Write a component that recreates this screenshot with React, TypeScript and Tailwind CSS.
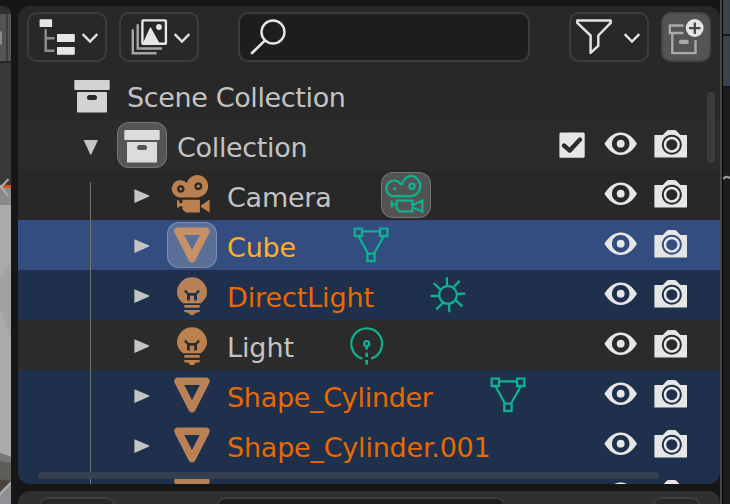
import React from "react";

type IconKind = "collection" | "camera" | "mesh" | "bulb";
type DataKind = "camera" | "mesh" | "sun" | "point";

interface Item {
  name: string;
  icon: IconKind;
  row: string;
  text: string;
  nameWidth?: string;
  data?: DataKind;
  active?: boolean;
  dataActive?: boolean;
}

const items: Item[] = [
  { name: "Camera", icon: "camera", row: "bg-[#282828]", text: "text-[#c3c3c3] tracking-[-0.25px]", nameWidth: "w-[154px]", data: "camera", dataActive: true },
  { name: "Cube", icon: "mesh", row: "bg-[#334d80]", text: "text-[#ffaf29] tracking-[-0.2px]", nameWidth: "w-[119px]", data: "mesh", active: true },
  { name: "DirectLight", icon: "bulb", row: "bg-[#1e304b]", text: "text-[#e96a00] tracking-[-0.12px]", nameWidth: "w-[196px]", data: "sun" },
  { name: "Light", icon: "bulb", row: "bg-[#2b2b2b]", text: "text-[#c3c3c3] tracking-[-0.1px]", nameWidth: "w-[115px]", data: "point" },
  { name: "Shape_Cylinder", icon: "mesh", row: "bg-[#1e304b]", text: "text-[#e96a00] tracking-[-0.3px]", nameWidth: "w-[256px]", data: "mesh" },
  { name: "Shape_Cylinder.001", icon: "mesh", row: "bg-[#1e304b]", text: "text-[#e96a00] tracking-[-0.22px]" },
  { name: "", icon: "mesh", row: "bg-[#1e304b]", text: "text-[#e96a00]" },
];

const cell = { width: 50, height: 50, viewBox: "0 0 50 50", className: "shrink-0" };

function CollectionIcon({ hole = "#282828", fill = "#d3d3d3" }) {
  return (
    <svg {...cell} fill={fill}>
      <rect x="7.3" y="10" width="35.4" height="10" rx="1" />
      <rect x="10" y="22" width="30" height="20.6" rx=".7" />
      <rect x="20" y="25" width="10" height="5" rx="2.5" fill={hole} />
    </svg>
  );
}

function ObjectIcon({ kind }: { kind: IconKind }) {
  if (kind === "mesh")
    return (
      <svg {...cell} fill="none" stroke="currentColor" strokeWidth="7.6" strokeLinejoin="round">
        <path d="M11.1 11.2H38.9L25 38.5Z" />
      </svg>
    );
  if (kind === "bulb")
    return (
      <svg {...cell} fill="currentColor">
        <path
          fillRule="evenodd"
          d="M25 7.3A15 15 0 0 1 40 22.3C40 27 37.5 30 34 33.2H16C12.5 30 10 27 10 22.3A15 15 0 0 1 25 7.3ZM18.7 19.4L17.1 21.6 20 24.4V30.4H22.9V25.8H27.1V30.4H30V24.4L32.9 21.6 31.3 19.4 28.4 23H21.6Z"
        />
        <rect x="17.3" y="35" width="15.4" height="2.7" rx=".6" />
        <path d="M17.3 40H32.7V42L28 43 27 45H23L22 43 17.3 42Z" />
      </svg>
    );
  return (
    <svg {...cell} fill="currentColor">
      <path
        fillRule="evenodd"
        d="M31 4.9A11.3 11.3 0 0 1 31 27.4H13.6A8.6 8.6 0 1 1 19.8 13.1A11.3 11.3 0 0 1 31 4.9ZM31.3 12.2a4 4 0 1 0 .01 0ZM13.8 15.1a3.8 3.8 0 1 0 .01 0Z"
      />
      <circle cx="31.3" cy="16.2" r="1.6" />
      <circle cx="13.8" cy="18.9" r="1.4" />
      <path d="M15.4 29.8H32.9V42.6H19L15.4 39.5V36.2H12.3V37.4H10V30.2H12.3V33H15.4Z" />
      <path d="M42.6 29.6V42.6L34 37V35.4Z" />
    </svg>
  );
}

function DataIcon({ kind }: { kind: DataKind }) {
  return (
    <svg {...cell} fill="none" stroke="currentColor" strokeWidth="2.3">
      {kind === "mesh" && (
        <path d="M8.7 8.7h7.3v7.3H8.7ZM34.1 8.7h7.3v7.3h-7.3ZM21.3 33.7h7.3v7.3h-7.3ZM16.5 11.4H33.8M12.7 16.5L21.8 33.2M37.6 16.5L28.2 33.2" />
      )}
      {kind === "camera" && (
        <>
          <path d="M30.7 5.9A10.3 10.3 0 0 1 30.7 26.2H13.5A7.8 7.8 0 1 1 19.8 14.2H21.2A10.3 10.3 0 0 1 30.7 5.9Z" />
          <circle cx="31.1" cy="16.2" r="2.6" />
          <circle cx="13.7" cy="18.7" r="1.6" fill="currentColor" stroke="none" />
          <path d="M15.8 30.6H31.4V41.3H18.8L15.8 38.5ZM10.8 30.4V37.4M10.8 34.3H15.8M31.4 35.3L41.4 30.6V41.6L31.4 37.3" />
        </>
      )}
      {kind === "sun" && (
        <path d="M25 16.1a8.8 8.8 0 1 0 .01 0ZM23.8 7.3L24 16M36.7 10.7L31 16.7M42.2 23.7L34 24M39.4 36.4L32.4 30M26.4 42.3L26 33.6M13.3 39.4L19.7 33M7.6 26H16M10.6 13L17.3 19.3" />
      )}
      {kind === "point" && (
        <>
          <path d="M20.3 38.6A15.4 15.4 0 1 1 29.1 38.6" />
          <circle cx="24.7" cy="23.7" r="2.5" />
          <path d="M24.7 26V29.6M24.7 32.7V37M24.7 40V44.6" strokeWidth="2.7" />
        </>
      )}
    </svg>
  );
}

function Eye() {
  return (
    <svg width="34" height="50" viewBox="0 0 34 50" className="shrink-0" fill="#e6e6e6">
      <path
        fillRule="evenodd"
        d="M.4 23.8C5 16.5 10 12.4 16.7 12.4S28.5 16.5 33 23.8C28.5 31 23.5 35 16.7 35S5 31 .4 23.8ZM16.7 14.9a8.8 8.8 0 1 0 .01 0Z"
      />
      <circle cx="16.7" cy="23.7" r="3.9" />
    </svg>
  );
}

function RenderCamera() {
  return (
    <svg width="34" height="50" viewBox="0 0 34 50" className="shrink-0" fill="#e6e6e6">
      <path
        fillRule="evenodd"
        d="M1 15H8.8L12.6 11Q13.6 10 15 10H20.4Q21.6 10 22.6 11L26.4 15H32.5Q33 15 33 15.6V37Q33 37.6 32.4 37.6H1Q.4 37.6 .4 37V15.6Q.4 15 1 15ZM17.8 14.7a10 10 0 1 0 .01 0Z"
      />
      <circle cx="17.8" cy="24.7" r="6.8" fill="none" stroke="#e6e6e6" strokeWidth="2.5" />
    </svg>
  );
}

function Toggles() {
  return (
    <div className="ml-auto mr-[32px] flex gap-4">
      <Eye />
      <RenderCamera />
    </div>
  );
}

function Chip({ on, children }: { on?: boolean; children: React.ReactNode }) {
  return (
    <div className="relative h-[50px] w-[50px] shrink-0">
      {on && <div className="absolute inset-x-0 top-[2px] h-[46px] rounded-[12px] border border-white/20 bg-white/20" />}
      <div className="relative">{children}</div>
    </div>
  );
}

function Row({ item }: { item: Item }) {
  return (
    <div className={`flex h-[50px] shrink-0 pl-[116px] ${item.row}`}>
      <svg width="33" height="50" viewBox="0 0 33 50" className="shrink-0" fill="#c4c4c4">
        <path d="M.4 19.3L15.2 25.6V26.6L.4 33Z" />
      </svg>
      <div className={item.active ? "text-[#c69068]" : item.row === "bg-[#1e304b]" ? "text-[#b88256]" : "text-[#bb804d]"}>
        <Chip on={item.active}>
          <ObjectIcon kind={item.icon} />
        </Chip>
      </div>
      <div className={`ml-[10px] shrink-0 leading-[56px] ${item.nameWidth ?? ""} ${item.text}`}>{item.name}</div>
      {item.data && (
        <div className="text-[#10b090]">
          <Chip on={item.dataActive}>
            <DataIcon kind={item.data} />
          </Chip>
        </div>
      )}
      <Toggles />
    </div>
  );
}

function Chevron() {
  return (
    <svg width="18" height="12" viewBox="0 0 18 12" fill="none" stroke="#e2e2e2" strokeWidth="2.4">
      <path d="M1.7 1.2L9 8.5L16.3 1.2" />
    </svg>
  );
}

const control = "flex h-[50px] shrink-0 items-center rounded-[10px] border-2 border-[#3d3d3d]";

function Header() {
  return (
    <div className="flex h-16 shrink-0 pl-[9px] pt-[6px]">
      <div className={`${control} w-[80px] pl-[10px]`}>
        <svg width="36" height="38" viewBox="39 18 36 38" fill="#e6e6e6">
          <rect x="39.6" y="19.3" width="12.5" height="7.7" rx=".6" />
          <path d="M45.7 29.3V50.8H54.5M45.7 38.3H54.5" fill="none" stroke="#8d8d8d" strokeWidth="2.5" />
          <rect x="57" y="34" width="17.8" height="8" rx=".6" />
          <rect x="57" y="47" width="17.8" height="7.7" rx=".6" />
        </svg>
        <div className="ml-[6px] mt-[4px]"><Chevron /></div>
      </div>
      <div className={`${control} ml-[12px] w-[80px] pl-[10px]`}>
        <svg width="37" height="38" viewBox="131 18 37 38" fill="none">
          <path d="M137.7 24.3V48.5H162M132.8 29.3V53.3H156.7" stroke="#a5a5a5" strokeWidth="2.4" />
          <rect x="142.4" y="20.4" width="23.5" height="23.4" rx=".8" stroke="#e6e6e6" strokeWidth="2.4" />
          <path d="M143 43L149.8 28Q150.4 26.6 151.1 28L159.4 43Z" fill="#e6e6e6" />
          <circle cx="159" cy="27" r="2.9" fill="#e6e6e6" />
        </svg>
        <div className="ml-[5px] mt-[4px]"><Chevron /></div>
      </div>
      <div className={`${control} ml-[39px] w-[292px] bg-[#1d1d1d] pl-[10px]`}>
        <svg width="38" height="38" viewBox="250 18 38 38" fill="none" stroke="#e4e4e4" strokeLinecap="round">
          <circle cx="273" cy="32" r="11.5" strokeWidth="2.4" />
          <path d="M264.8 40.6L252 53" strokeWidth="2.7" />
        </svg>
      </div>
      <div className={`${control} ml-[39px] w-[80px] pl-[4px]`}>
        <svg width="38" height="38" viewBox="575 18 38 38" fill="none" stroke="#e2e2e2" strokeWidth="2.5" strokeLinejoin="round">
          <path d="M577.3 20.5H610.7V22.8L598.3 35.5V45.8L590.6 52.9V35.5L577.3 22.8Z" />
        </svg>
        <div className="ml-[10px] mt-[4px]"><Chevron /></div>
      </div>
      <div className={`${control} ml-[12px] w-[50px] border-[#464646] bg-[#545454] pl-[4px]`}>
        <svg width="38" height="38" viewBox="667 18 38 38" fill="none" stroke="#a9a9a9" strokeWidth="2.4">
          <path d="M683.5 25.5H669.8V33H683.5M672.3 33V53.1H695.5V40" />
          <rect x="678.8" y="39.8" width="10" height="4.3" rx="2.1" fill="#a9a9a9" stroke="none" />
          <circle cx="694.7" cy="28" r="8.9" fill="#e6e6e6" stroke="none" />
          <path d="M689 28.2H700.5M694.8 22.4V34" stroke="#464646" strokeWidth="2.3" />
        </svg>
      </div>
    </div>
  );
}

function ViewportEdge() {
  return (
    <div className="flex w-[11px] shrink-0 flex-col overflow-hidden pt-[6px]">
      <div className="h-[8px] shrink-0 rounded-tr-[11px] bg-[#303030]" />
      <div className="flex h-[47px] shrink-0 items-center bg-[#545454]">
        <div className="h-[14px] w-[2px] rounded-r-full bg-[#8b8b8b]" />
        <div className="ml-[4px] h-full w-[2px] bg-[#3d3d3d]" />
      </div>
      <div className="h-[2px] shrink-0 bg-[#282828]" />
      <div className="h-[115px] shrink-0 bg-[#383838]" />
      <svg width="11" height="326" viewBox="0 178 11 326" className="shrink-0">
        <path d="M0 178H11V504H0Z" fill="#383838" />
        <path d="M0 185H11V504H0Z" fill="#aaabad" />
        <path d="M0 188H11V205H0Z" fill="#8a8a8b" />
        <path d="M3 184.3L11 185.3V188L0 187.5Z" fill="#d54d12" />
        <path d="M8.5 179L1 187L8.5 196" fill="none" stroke="#aaa" strokeWidth="2" />
        <path d="M0 276L11 262V341L0 308Z" fill="#a1a2a4" />
        <path d="M0 453L11 457V482L0 479Z" fill="#5d5d59" />
        <path d="M0 453L11 457V463L0 461Z" fill="#777875" />
        <path d="M0 479L11 481L0 492Z" fill="#49413d" />
        <path d="M0 496L11 484V504H0Z" fill="#8e9093" />
      </svg>
    </div>
  );
}

function PropertiesEdge() {
  return (
    <div className="flex w-[10px] shrink-0 border-l-2 border-[#484848] bg-black pl-px">
      <div className="flex flex-1 flex-col bg-[#1c1c1c]">
        <div className="h-[34px] bg-[#38434d]" />
        <div className="h-[2px] bg-[#0b1a29]" />
        <div className="h-[50px] bg-[#38434d]" />
        <div className="h-[2px] bg-[#061728]" />
        <svg width="7" height="12" viewBox="0 0 7 12" className="mt-[86px]" fill="none">
          <path d="M0 5Q4 1 7 4.5" stroke="#999" strokeWidth="2.4" />
        </svg>
      </div>
    </div>
  );
}

export default function App() {
  return (
    <div className="flex h-[504px] w-[730px] overflow-hidden bg-[#161616] font-['DejaVu_Sans',sans-serif] text-[27px]">
      <ViewportEdge />
      <div className="ml-[7px] flex w-[702px] shrink-0 flex-col pt-[6px]">
        <div className="relative flex h-[478px] shrink-0 flex-col overflow-hidden rounded-[12px] bg-[#282828] whitespace-nowrap">
          <Header />
          <div className="flex h-[50px] shrink-0 pl-[49px] text-[#c3c3c3]">
            <CollectionIcon />
            <div className="ml-[10px] leading-[56px] tracking-[-0.37px]">Scene Collection</div>
          </div>
          <div className="flex h-[50px] shrink-0 bg-[#2b2b2b] pl-[65px] text-[#c3c3c3]">
            <svg width="34" height="50" viewBox="0 0 34 50" className="shrink-0" fill="#c4c4c4">
              <path d="M.6 20H15L8.3 34.4H7.3Z" />
            </svg>
            <Chip on>
              <CollectionIcon hole="#545454" fill="#dcdcdc" />
            </Chip>
            <div className="ml-[10px] leading-[56px] tracking-[-0.33px]">Collection</div>
            <svg width="26" height="50" viewBox="0 0 26 50" className="ml-auto shrink-0" fill="none">
              <rect x=".4" y="12.4" width="25.3" height="25.3" rx="1.5" fill="#e6e6e6" />
              <path d="M5 25.5L10.8 30.6L21 19.6" stroke="#2b2b2b" strokeWidth="4.4" strokeLinecap="round" strokeLinejoin="round" />
            </svg>
            <div className="ml-[19px] flex">
              <Toggles />
            </div>
          </div>
          {items.map((item, i) => (
            <Row key={i} item={item} />
          ))}
          <div className="absolute bottom-0 left-[72px] top-[176px] w-px bg-[#75736f]" />
          <div className="absolute left-[689px] top-[86px] h-[71px] w-2 rounded-full bg-[#3b3b3b]" />
          <div className="absolute left-[20px] top-[466px] h-[7px] w-[621px] rounded-full bg-[#363f50]" />
        </div>
        <div className="mt-[7px] flex h-[13px] shrink-0 overflow-hidden rounded-t-[12px] bg-[#303030] pl-[20px] pt-[6px]">
          <div className="h-5 w-[78px] shrink-0 rounded-[10px] border-2 border-[#3d3d3d] bg-[#282828]" />
          <div className="ml-[100px] h-5 w-[290px] shrink-0 rounded-[10px] border-2 border-[#3d3d3d] bg-[#1d1d1d]" />
          <div className="ml-[146px] h-5 w-[49px] shrink-0 rounded-[10px] border-2 border-[#3d3d3d] bg-[#282828]" />
        </div>
      </div>
      <PropertiesEdge />
    </div>
  );
}
